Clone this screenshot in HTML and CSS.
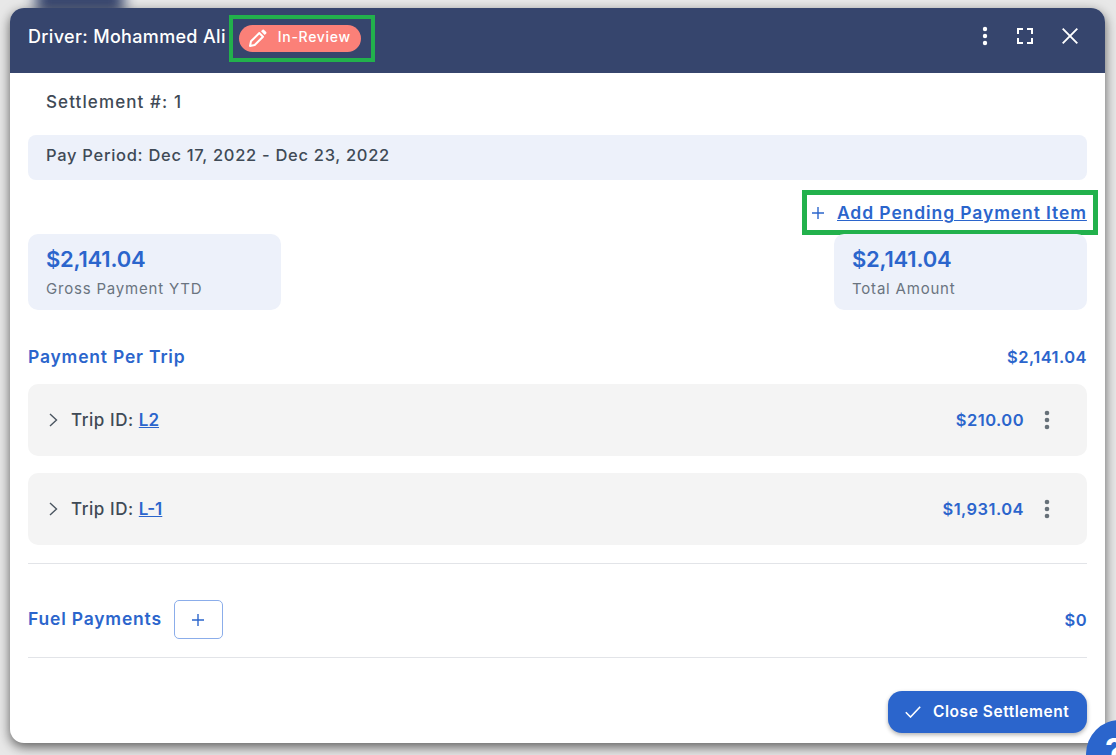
FILE: index.html
```html
<!DOCTYPE html>
<html lang="en">
<head>
<meta charset="utf-8">
<title>Settlement</title>
<link rel="stylesheet" href="styles.css">
</head>
<body>
<div class="smudge"></div>
<main class="dialog">
  <header class="dialog-head">
    <div class="head-left">
      <h1 class="title">Driver: Mohammed Ali</h1>
      <div class="chip-mark">
        <span class="chip">
          <svg class="chip-icon" viewBox="0 0 20 20"><path d="M3 13.300L2 18l4.700-1L15 8.700 11.300 5z" fill="none" stroke="#fff" stroke-width="2" stroke-linejoin="round"/><path d="M13 3.300l1.500-1.500a1 1 0 0 1 1.400 0l2.300 2.300a1 1 0 0 1 0 1.400L16.700 7z" fill="#fff"/></svg>
          <span class="chip-text">In-Review</span>
        </span>
      </div>
    </div>
    <div class="head-actions">
      <svg class="h-dots" viewBox="0 0 6 20"><circle cx="3" cy="3" r="2.200"/><circle cx="3" cy="10" r="2.200"/><circle cx="3" cy="17" r="2.200"/></svg>
      <svg class="h-full" viewBox="0 0 16 16"><path d="M1 6V1h5M10 1h5v5M15 10v5h-5M6 15H1v-5" fill="none" stroke="#fff" stroke-width="2"/></svg>
      <svg class="h-close" viewBox="0 0 16 16"><path d="M.7.7l14.600 14.600M15.300.7L.7 15.300" fill="none" stroke="#fff" stroke-width="1.900"/></svg>
    </div>
  </header>
  <div class="dialog-body">
    <div class="settlement">Settlement #: 1</div>
    <div class="period">Pay Period: Dec 17, 2022 - Dec 23, 2022</div>
    <div class="add-row">
      <div class="add-mark">
        <svg class="plus" viewBox="0 0 12 12"><path d="M6 0v12M0 6h12" fill="none" stroke="#2b65cc" stroke-width="1.400"/></svg>
        <a class="add-link" href="#">Add Pending Payment Item</a>
      </div>
    </div>
    <div class="cards">
      <div class="card"><div class="card-num">$2,141.04</div><div class="card-label">Gross Payment YTD</div></div>
      <div class="card"><div class="card-num">$2,141.04</div><div class="card-label">Total Amount</div></div>
    </div>
    <div class="section-row">
      <span class="section-title">Payment Per Trip</span>
      <span class="section-value">$2,141.04</span>
    </div>
    <div class="trip">
      <div class="trip-left">
        <svg class="chev" viewBox="0 0 9 14"><path d="M1 1l6.500 6L1 13" fill="none" stroke="#4a5560" stroke-width="1.400"/></svg>
        <span class="trip-label">Trip ID: <a class="trip-link" href="#">L2</a></span>
      </div>
      <div class="trip-right">
        <span class="section-value">$210.00</span>
        <svg class="t-dots" viewBox="0 0 6 20"><circle cx="3" cy="3" r="2.300"/><circle cx="3" cy="10" r="2.300"/><circle cx="3" cy="17" r="2.300"/></svg>
      </div>
    </div>
    <div class="trip">
      <div class="trip-left">
        <svg class="chev" viewBox="0 0 9 14"><path d="M1 1l6.500 6L1 13" fill="none" stroke="#4a5560" stroke-width="1.400"/></svg>
        <span class="trip-label">Trip ID: <a class="trip-link" href="#">L-1</a></span>
      </div>
      <div class="trip-right">
        <span class="section-value">$1,931.04</span>
        <svg class="t-dots" viewBox="0 0 6 20"><circle cx="3" cy="3" r="2.300"/><circle cx="3" cy="10" r="2.300"/><circle cx="3" cy="17" r="2.300"/></svg>
      </div>
    </div>
    <div class="fuel-row">
      <div class="fuel-left">
        <span class="section-title">Fuel Payments</span>
        <button class="fuel-add" type="button"><svg class="plus" viewBox="0 0 12 12"><path d="M6 0v12M0 6h12" fill="none" stroke="#2b65cc" stroke-width="1.400"/></svg></button>
      </div>
      <span class="section-value">$0</span>
    </div>
    <div class="foot">
      <button class="close-btn" type="button">
        <svg class="check" viewBox="0 0 16 12"><path d="M.8 6.300l4.700 4.700L15.200.8" fill="none" stroke="#fff" stroke-width="1.600"/></svg>
        <span class="close-text">Close Settlement</span>
      </button>
    </div>
  </div>
</main>
<div class="help"><span class="help-mark">?</span></div>
</body>
</html>
```
FILE: styles.css
```css
* { box-sizing: border-box; }
html, body { height: 100%; }
html { overflow: hidden; }
body {
  margin: 0;
  padding: 8px 11px 12px 10px;
  background: #e8e8e8;
  font-family: Inter, "Noto Sans", sans-serif;
  color: #3f4a56;
  position: relative;
  overflow: hidden;
}
.smudge {
  position: absolute;
  left: 36px;
  top: -14px;
  width: 88px;
  height: 28px;
  background: #36456d;
  filter: blur(7px);
}
.dialog {
  position: relative;
  height: 735px;
  background: #fff;
  border-radius: 14px;
  overflow: hidden;
  box-shadow: 0 4px 12px rgba(0, 0, 0, .6);
}
.dialog-head {
  height: 65px;
  background: #36456d;
  display: flex;
  align-items: center;
  justify-content: space-between;
  padding: 0 27px 9px 18px;
}
.head-left { display: flex; align-items: center; }
.title {
  margin: 0;
  font-size: 18px;
  font-weight: 500;
  color: #fff;
  letter-spacing: .33px;
  white-space: nowrap;
}
.chip-mark {
  margin-left: 3px;
  width: 146px;
  height: 47px;
  margin-top: 5px;
  border: 4px solid #22b14c;
  display: flex;
  align-items: center;
  padding-left: 6px;
  padding-bottom: 1px;
}
.chip {
  width: 122px;
  height: 27px;
  border-radius: 14px;
  background: #fb8078;
  display: flex;
  align-items: center;
  padding-left: 9px;
  color: #fff;
}
.chip-icon { width: 20px; height: 20px; flex: none; }
.chip-text { margin-left: 10px; font-size: 14px; font-weight: 500; letter-spacing: .7px; margin-top: -3px; }
.head-actions { display: flex; align-items: center; }
.h-dots { width: 6px; height: 20px; fill: #fff; }
.h-full { width: 16px; height: 16px; margin-left: 29px; }
.h-close { width: 16px; height: 16px; margin-left: 29px; }
.dialog-body { padding: 0 18px; }
.settlement {
  height: 62px;
  padding: 18px 0 0 18px;
  font-size: 17px;
  letter-spacing: 1.100px;
  font-weight: 500;
  line-height: 22px;
}
.period {
  height: 45px;
  background: #edf1fa;
  border-radius: 8px;
  padding: 9px 0 0 18px;
  font-size: 16.500px;
  letter-spacing: .7px;
  font-weight: 500;
  line-height: 22px;
}
.add-row {
  height: 54px;
  display: flex;
  justify-content: flex-end;
  padding-top: 10px;
}
.add-mark {
  width: 296px;
  height: 45px;
  margin-right: -11px;
  border: 5px solid #22b14c;
  display: flex;
  align-items: center;
  padding-left: 5px;
}
.plus { width: 12px; height: 12px; flex: none; }
.add-link {
  margin-left: 13px;
  font-size: 17.500px;
  letter-spacing: .9px;
  font-weight: 600;
  color: #2b65cc;
  white-space: nowrap;
}
.cards { display: flex; justify-content: space-between; }
.card {
  width: 253px;
  height: 76px;
  background: #edf1fa;
  border-radius: 10px;
  padding: 10px 18px;
}
.card-num { font-size: 22px; font-weight: 600; color: #2b65cc; line-height: 30px; letter-spacing: -.2px; }
.card-label { font-size: 15px; letter-spacing: .8px; color: #6a7480; line-height: 22px; margin-top: 4px; }
.section-row {
  height: 74px;
  display: flex;
  align-items: center;
  justify-content: space-between;
  padding-top: 20px;
}
.section-title { font-size: 17.500px; letter-spacing: .8px; font-weight: 600; color: #2b65cc; white-space: nowrap; line-height: 20px; margin-top: -1px; }
.section-value { font-size: 16.500px; letter-spacing: .45px; font-weight: 600; color: #2b65cc; }
.trip {
  height: 72px;
  margin-bottom: 17px;
  background: #f4f4f4;
  border-radius: 10px;
  display: flex;
  align-items: center;
  justify-content: space-between;
  padding: 0 37px 0 21px;
}
.trip-left, .trip-right { display: flex; align-items: center; }
.chev { width: 9px; height: 14px; }
.trip-label { margin-left: 13px; font-size: 17px; font-weight: 500; letter-spacing: .55px; }
.trip-link { color: #2b65cc; font-weight: 600; letter-spacing: 0; }
.t-dots { width: 6px; height: 20px; margin-left: 20px; fill: #667078; }
.fuel-row {
  height: 95px;
  margin-top: 18px;
  padding-top: 18px;
  border-top: 1px solid #e2e4e8;
  border-bottom: 1px solid #e2e4e8;
  display: flex;
  align-items: center;
  justify-content: space-between;
}
.fuel-left { display: flex; align-items: center; }
.fuel-add {
  width: 49px;
  height: 39px;
  margin-left: 12px;
  background: #fff;
  border: 1px solid #8badea;
  border-radius: 5px;
  padding: 0;
  display: flex;
  align-items: center;
  justify-content: center;
}
.foot { display: flex; justify-content: flex-end; padding-top: 33px; }
.close-btn {
  width: 199px;
  height: 42px;
  background: #2b65cc;
  color: #fff;
  border: 0;
  border-radius: 14px;
  box-shadow: 0 2px 4px rgba(0, 0, 0, .3);
  font-family: inherit;
  font-size: 15.500px;
  letter-spacing: .55px;
  font-weight: 600;
  display: flex;
  align-items: center;
  padding: 0 0 0 17px;
}
.close-text { margin-top: -2px; }
.check { width: 16px; height: 12px; margin-right: 12px; }
.help {
  position: absolute;
  left: 1086px;
  top: 720px;
  width: 68px;
  height: 68px;
  border-radius: 50%;
  background: #2b65cc;
  color: #fff;
  padding: 11px 0 0 19px;
  line-height: 40px;
}
.help-mark { font-size: 34px; font-weight: 700; }
```
